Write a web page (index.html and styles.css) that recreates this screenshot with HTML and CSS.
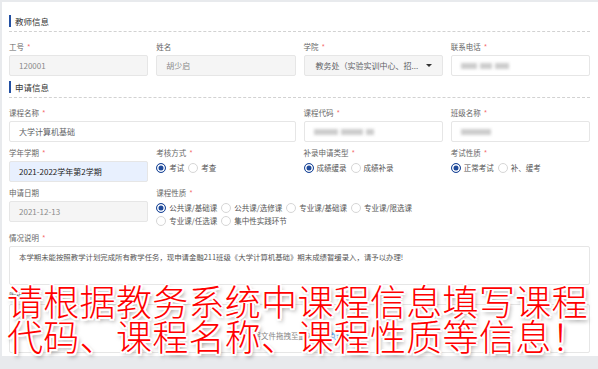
FILE: index.html
```html
<!DOCTYPE html>
<html lang="zh-CN">
<head>
    <meta charset="UTF-8">
    <title>成绩缓录申请</title>
    <link rel="stylesheet" href="styles.css">
</head>
<body>
    <div class="card">
        <div class="section-head"><span class="section-title">教师信息</span></div>
        <div class="grid">
            <div class="field">
                <div class="label">工号<span class="req">*</span></div>
                <div class="box disabled">120001</div>
            </div>
            <div class="field">
                <div class="label">姓名</div>
                <div class="box disabled">胡少启</div>
            </div>
            <div class="field">
                <div class="label">学院<span class="req">*</span></div>
                <div class="box select disabled">
                    <span>教务处（实验实训中心、招...</span>
                    <span class="caret"></span>
                </div>
            </div>
            <div class="field">
                <div class="label">联系电话<span class="req">*</span></div>
                <div class="box">
                    <span class="blur" style="width: 16px"></span>
                    <span class="blur" style="width: 12px"></span>
                    <span class="blur" style="width: 14px"></span>
                </div>
            </div>
        </div>

        <div class="section-head second"><span class="section-title">申请信息</span></div>
        <div class="grid">
            <div class="field span-2">
                <div class="label">课程名称<span class="req">*</span></div>
                <div class="box">大学计算机基础</div>
            </div>
            <div class="field">
                <div class="label">课程代码<span class="req">*</span></div>
                <div class="box">
                    <span class="blur" style="width: 24px"></span>
                    <span class="blur" style="width: 22px"></span>
                    <span class="blur" style="width: 8px"></span>
                </div>
            </div>
            <div class="field">
                <div class="label">班级名称<span class="req">*</span></div>
                <div class="box">
                    <span class="blur" style="width: 30px"></span>
                </div>
            </div>

            <div class="field">
                <div class="label">学年学期<span class="req">*</span></div>
                <div class="box filled">2021-2022学年第2学期</div>
            </div>
            <div class="field">
                <div class="label">考核方式<span class="req">*</span></div>
                <div class="radio-row">
                    <span class="radio"><i class="dot checked"></i>考试</span>
                    <span class="radio"><i class="dot"></i>考查</span>
                </div>
            </div>
            <div class="field">
                <div class="label">补录申请类型<span class="req">*</span></div>
                <div class="radio-row">
                    <span class="radio"><i class="dot checked"></i>成绩缓录</span>
                    <span class="radio"><i class="dot"></i>成绩补录</span>
                </div>
            </div>
            <div class="field">
                <div class="label">考试性质<span class="req">*</span></div>
                <div class="radio-row">
                    <span class="radio"><i class="dot checked"></i>正常考试</span>
                    <span class="radio"><i class="dot"></i>补、缓考</span>
                </div>
            </div>

            <div class="field">
                <div class="label">申请日期</div>
                <div class="box disabled">2021-12-13</div>
            </div>
            <div class="field span-3">
                <div class="label">课程性质<span class="req">*</span></div>
                <div class="radio-row">
                    <span class="radio"><i class="dot checked"></i>公共课/基础课</span>
                    <span class="radio"><i class="dot"></i>公共课/选修课</span>
                    <span class="radio"><i class="dot"></i>专业课/基础课</span>
                    <span class="radio"><i class="dot"></i>专业课/限选课</span>
                </div>
                <div class="radio-row">
                    <span class="radio"><i class="dot"></i>专业课/任选课</span>
                    <span class="radio"><i class="dot"></i>集中性实践环节</span>
                </div>
            </div>

            <div class="field span-4">
                <div class="label">情况说明<span class="req">*</span></div>
                <div class="textarea">本学期未能按照教学计划完成所有教学任务，现申请金融211班级《大学计算机基础》期末成绩暂缓录入，请予以办理!</div>
            </div>

            <div class="field span-4">
                <div class="label">附件</div>
                <div class="upload">
                    <svg width="9" height="9" viewBox="0 0 16 16" fill="none" stroke="#409eff" stroke-width="1.6">
                        <path d="M4 12h-.5A3 3 0 0 1 3.5 6 4.5 4.5 0 0 1 12 5a3 3 0 0 1 .5 7H12"/>
                        <path d="M8 14V8M5.5 10.5 8 8l2.5 2.5"/>
                    </svg>
                    <span>将文件拖拽至此处，或<em>点击上传</em></span>
                </div>
            </div>
        </div>
    </div>

    <div class="notice">请根据教务系统中课程信息填写课程<br>代码、课程名称、课程性质等信息！</div>
</body>
</html>
```

FILE: styles.css
```css
body {
    margin: 0;
    background-color: #e8eaed;
    font-family: "Noto Sans CJK SC", "Noto Sans", sans-serif;
    font-size: 7.5px;
    color: #666;
    height: 369px;
    overflow: hidden;
    position: relative;
}

.card {
    margin: 2px 0 0 2px;
    padding: 12px 8px 3px 7px;
    background-color: #fff;
}

.section-head {
    height: 14px;
    padding-bottom: 3px;
    border-bottom: 1px dashed #d2d2d2;
    display: flex;
    align-items: center;
}

.section-head.second {
    margin-top: 4px;
}

.section-title {
    display: flex;
    align-items: center;
    font-size: 8.5px;
    color: #333;
}

.section-title::before {
    content: "";
    width: 2px;
    height: 12px;
    margin-right: 4px;
    background-color: #2350a3;
}

.grid {
    display: grid;
    grid-template-columns: repeat(4, 1fr);
    column-gap: 8px;
    row-gap: 6px;
    margin-top: 10px;
}

.field {
    display: flex;
    flex-direction: column;
    min-width: 0;
}

.span-2 { grid-column: span 2; }
.span-3 { grid-column: span 3; }
.span-4 { grid-column: span 4; }

.label {
    height: 10px;
    line-height: 10px;
    margin-bottom: 3px;
    white-space: nowrap;
}

.req {
    color: #f56c6c;
    margin-left: 3px;
}

.box {
    height: 21px;
    box-sizing: border-box;
    display: flex;
    align-items: center;
    gap: 3px;
    padding: 0 9px;
    border: 1px solid #e6e6e6;
    border-radius: 2px;
    font-size: 8px;
    color: #606266;
    white-space: nowrap;
    overflow: hidden;
}

.box.disabled {
    background-color: #f5f5f5;
    color: #8a8a8a;
}

.box.filled {
    background-color: #e8f0fe;
    color: #222;
}

.box.select {
    justify-content: space-between;
    padding: 0 10px 0 11px;
    color: #606266;
}

.caret {
    width: 0;
    height: 0;
    border-left: 3px solid transparent;
    border-right: 3px solid transparent;
    border-top: 3px solid #333;
}

.blur {
    display: inline-block;
    height: 6px;
    background-color: #cdcdcd;
    filter: blur(1.8px);
}

.radio-row {
    display: flex;
    height: 13px;
    line-height: 13px;
    white-space: nowrap;
}

.radio {
    display: inline-flex;
    align-items: center;
    margin-right: 4px;
    color: #555;
}

.dot {
    width: 10px;
    height: 10px;
    box-sizing: border-box;
    margin-right: 3px;
    border: 1px solid #d6d6d6;
    border-radius: 50%;
    background-color: #fff;
}

.dot.checked {
    border-color: #1f4a9a;
    background-color: #1f4a9a;
    box-shadow: inset 0 0 0 1.5px #fff;
}

.textarea {
    height: 39px;
    box-sizing: border-box;
    padding: 4px 9px;
    line-height: 11px;
    border: 1px solid #e6e6e6;
    border-radius: 2px;
    color: #555;
    font-size: 7.4px;
}

.upload {
    height: 49px;
    box-sizing: border-box;
    display: flex;
    align-items: flex-end;
    justify-content: center;
    gap: 4px;
    padding-bottom: 11px;
    border: 1px solid #e6e6e6;
    border-radius: 2px;
    color: #888;
}

.upload em {
    font-style: normal;
    color: #409eff;
}

.notice {
    position: absolute;
    left: 7px;
    top: 283px;
    font-size: 36px;
    font-weight: 300;
    line-height: 35px;
    letter-spacing: 0.3px;
    color: #ff0000;
    white-space: nowrap;
    text-shadow:
        2px 0 #fff, -2px 0 #fff, 0 2px #fff, 0 -2px #fff,
        1.5px 1.5px #fff, -1.5px 1.5px #fff, 1.5px -1.5px #fff, -1.5px -1.5px #fff,
        2px 3px 4px rgba(0, 0, 0, 0.55);
}
```
